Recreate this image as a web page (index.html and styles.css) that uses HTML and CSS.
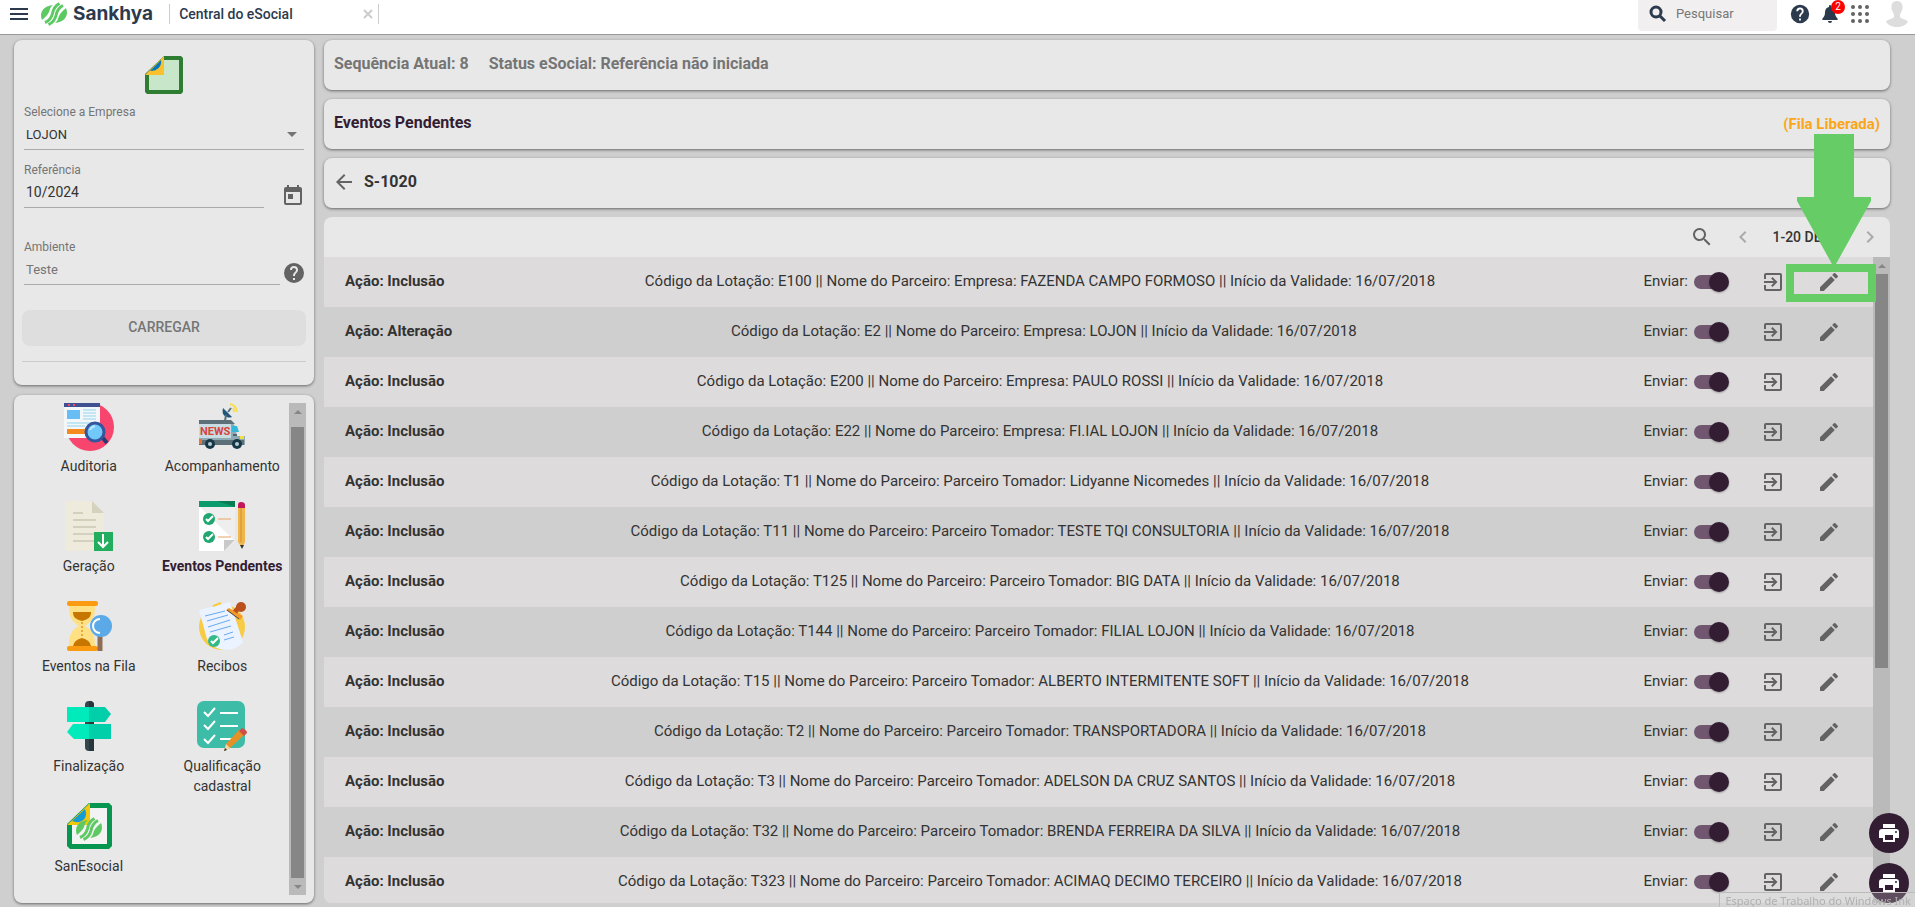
FILE: index.html
```html
<!DOCTYPE html>
<html lang="pt-BR">
<head>
    <meta charset="UTF-8">
    <meta name="viewport" content="width=device-width, initial-scale=1.0">
    <title>Central do eSocial</title>
    <link rel="stylesheet" href="styles.css">
</head>
<body>
    <!-- Ícones reutilizados -->
    <svg class="sprite" aria-hidden="true">
        <symbol id="i-help" viewBox="0 0 24 24"><path d="M12 2a10 10 0 1 0 0 20 10 10 0 0 0 0-20zm1 17h-2v-2h2v2zm2.07-7.75-.9.92C13.45 12.9 13 13.5 13 15h-2v-.5c0-1.1.45-2.1 1.17-2.83l1.24-1.26A2 2 0 1 0 10 9H8a4 4 0 1 1 8 0c0 .88-.36 1.68-.93 2.25z"/></symbol>
        <symbol id="i-search" viewBox="0 0 24 24"><path d="M15.5 14h-.79l-.28-.27a6.5 6.5 0 1 0-.7.7l.27.28v.79l5 4.99L20.49 19l-4.99-5zm-6 0a4.5 4.5 0 1 1 0-9 4.5 4.5 0 0 1 0 9z"/></symbol>
        <symbol id="i-exit" viewBox="0 0 24 24"><path d="M10.09 15.59 11.5 17l5-5-5-5-1.41 1.41L12.67 11H3v2h9.67l-2.58 2.59zM19 3H5a2 2 0 0 0-2 2v4h2V5h14v14H5v-4H3v4a2 2 0 0 0 2 2h14a2 2 0 0 0 2-2V5a2 2 0 0 0-2-2z"/></symbol>
        <symbol id="i-edit" viewBox="0 0 24 24"><path d="M3 17.25V21h3.75L17.81 9.94l-3.75-3.75L3 17.25zM20.71 7.04a1 1 0 0 0 0-1.41l-2.34-2.34a1 1 0 0 0-1.41 0l-1.83 1.83 3.75 3.75 1.83-1.83z"/></symbol>
        <symbol id="i-print" viewBox="0 0 24 24"><path d="M19 8H5a3 3 0 0 0-3 3v6h4v4h12v-4h4v-6a3 3 0 0 0-3-3zm-3 11H8v-5h8v5zm3-7a1 1 0 1 1 0-2 1 1 0 0 1 0 2zM18 3H6v4h12V3z"/></symbol>
        <symbol id="i-leaf" viewBox="0 0 28 24"><path d="M2 18C-1 11 3 4 13 3c-3 2-3 5-4 7-1 3-4 5-7 8z"/><path d="M5 20.500c5-2 6.500-5 7.500-9 1-5 3-8 7-10" fill="none" stroke="#5cc963" stroke-width="3"/><path d="M8.500 22.500c5-2 6.500-5 7.500-9 1-5 3-8 7-10" fill="none" stroke="#5cc963" stroke-width="3"/><path d="M26 6c3 7-1 14-11 15 3-2 3-5 4-7 1-3 4-5 7-8z"/></symbol>
    </svg>

    <header class="topbar">
        <button class="icon-btn menu-btn" type="button" aria-label="Menu">
            <svg width="18" height="12" viewBox="0 0 18 12"><path d="M0 0h18v2H0zM0 5h18v2H0zM0 10h18v2H0z"/></svg>
        </button>
        <a class="brand" href="#">
            <svg width="28" height="24"><use href="#i-leaf"/></svg>
            <span>Sankhya</span>
        </a>
        <div class="tab">
            <span>Central do eSocial</span>
            <button class="icon-btn tab-close" type="button" aria-label="Fechar">
                <svg width="10" height="10" viewBox="0 0 10 10"><path d="M1 1l8 8M9 1L1 9"/></svg>
            </button>
        </div>
        <label class="search">
            <svg width="18" height="18" viewBox="0 0 18 18"><circle cx="7" cy="7" r="5"/><path d="M11 11l5 5"/></svg>
            <input type="text" placeholder="Pesquisar" aria-label="Pesquisar">
        </label>
        <button class="icon-btn top-help" type="button" aria-label="Ajuda">
            <svg width="22" height="22"><use href="#i-help"/></svg>
        </button>
        <button class="icon-btn bell" type="button" aria-label="Notificações">
            <svg width="16" height="18" viewBox="0 0 16 18"><path d="M8 0a1 1 0 0 1 1 1v1c3 .6 4 3 4 5.500 0 3 1 4.500 2.500 6 .5.500.3 1.500-.5 1.500H1c-.8 0-1-1-.5-1.500C2 12 3 10.500 3 7.500 3 5 4 2.600 7 2V1a1 1 0 0 1 1-1zM6 16h4a2 2 0 0 1-4 0z"/></svg>
            <span class="badge">2</span>
        </button>
        <button class="icon-btn apps" type="button" aria-label="Aplicativos">
            <svg width="18" height="18" viewBox="0 0 18 18"><circle cx="2" cy="2" r="2"/><circle cx="9" cy="2" r="2"/><circle cx="16" cy="2" r="2"/><circle cx="2" cy="9" r="2"/><circle cx="9" cy="9" r="2"/><circle cx="16" cy="9" r="2"/><circle cx="2" cy="16" r="2"/><circle cx="9" cy="16" r="2"/><circle cx="16" cy="16" r="2"/></svg>
        </button>
        <button class="icon-btn avatar" type="button" aria-label="Usuário">
            <svg width="22" height="26" viewBox="0 0 22 26"><path d="M11 0c4 0 6 3 5.500 7-.3 3-1.500 5-2.500 6v3c1 2 7 2 8 5-3 4-7 5-11 5s-8-1-11-5c1-3 7-3 8-5v-3c-1-1-2.200-3-2.500-6C5 3 7 0 11 0z"/></svg>
        </button>
    </header>

    <div class="workspace">
        <aside class="sidebar">
            <form class="card filter">
                <svg class="filter-logo" width="38" height="38" viewBox="0 0 38 38">
                    <path d="M19 0h17l2 2v34l-2 2H2l-2-2V18z" fill="#2e7d32"/>
                    <path d="M19 4h15v30H4V18h15z" fill="#c8e6c9"/>
                    <path d="M19 0v19H0z" fill="#fbc02d"/>
                    <path d="M16 4c1 6-3 11-11 11z" fill="#0277bd"/>
                </svg>
                <div class="field">
                    <label for="empresa">Selecione a Empresa</label>
                    <div class="control select-control">
                        <select id="empresa"><option>LOJON</option></select>
                        <svg width="10" height="5" viewBox="0 0 10 5"><path d="M0 0h10L5 5z"/></svg>
                    </div>
                </div>
                <div class="field-row">
                    <div class="field field-ref">
                        <label for="referencia">Referência</label>
                        <input class="control large" type="text" id="referencia" value="10/2024">
                    </div>
                    <button class="icon-btn" type="button" aria-label="Calendário">
                        <svg width="24" height="24" viewBox="0 0 24 24"><path d="M19 3h-1V1h-2v2H8V1H6v2H5a2 2 0 0 0-2 2v14a2 2 0 0 0 2 2h14a2 2 0 0 0 2-2V5a2 2 0 0 0-2-2zm0 16H5V8h14v11zM7 10h5v5H7z"/></svg>
                    </button>
                </div>
                <div class="field-row field-row-env">
                    <div class="field">
                        <label for="ambiente">Ambiente</label>
                        <input class="control muted" type="text" id="ambiente" value="Teste" readonly>
                    </div>
                    <button class="icon-btn" type="button" aria-label="Ajuda do ambiente">
                        <svg width="24" height="24"><use href="#i-help"/></svg>
                    </button>
                </div>
                <button class="load-btn" type="button">CARREGAR</button>
                <hr>
            </form>

            <nav class="card menu">
                <div class="menu-scroll">
                    <div class="menu-grid">
                        <a href="#">
                            <svg width="50" height="50" viewBox="0 0 50 50">
                                <circle cx="26" cy="26" r="24" fill="#f8456d"/>
                                <path d="M0 0h36v37H0z" fill="#f4f7fa"/>
                                <path d="M0 0h36v6H0z" fill="#3f5190"/>
                                <path d="M4 3h2v2H4zM9 3h2v2H9z" fill="#f8456d"/>
                                <path d="M3 9h13v9H3z" fill="#69bdf5"/>
                                <path d="M19 9h13M19 12h13M19 15h13M19 18h13M3 22h30M3 25h18" stroke="#8fd5e9"/>
                                <path d="M3 28h18v5H3z" fill="#f58a1f"/>
                                <path d="M38 36l5 6" stroke="#2b3a75" stroke-width="4"/>
                                <circle cx="31" cy="31" r="9" fill="#70c9f8" stroke="#35569c" stroke-width="3"/>
                                <path d="M26 29q1-3 5-4" stroke="#b9e8ff" stroke-width="2" fill="none"/>
                            </svg>
                            <span>Auditoria</span>
                        </a>
                        <a href="#">
                            <svg width="50" height="50" viewBox="0 0 50 50">
                                <path d="M33 3q6 1 7 8M36 7q1 1 1 4" stroke="#f5df4d" stroke-width="2" fill="none"/>
                                <path d="M26 7c-2 7 3 11 9 9z" fill="#1f5578"/>
                                <path d="M31 11l3-4M29 14l-1 6" stroke="#557280" stroke-width="2"/>
                                <path d="M2 20h32l4 5 2 10h8v9H2z" fill="#90aab4"/>
                                <path d="M2 22h32v15H2z" fill="#c8dce3"/>
                                <path d="M2 19h32l4 4H2zM2 39h45v5H2z" fill="#5c7078"/>
                                <path d="M35 25h5l2 6h-7z" fill="#35b8d8"/>
                                <path d="M36 34h4" stroke="#111d24"/>
                                <path d="M2 38h3v5H2z" fill="#ed7436"/>
                                <path d="M43 35h4v3h-4z" fill="#f1df47"/>
                                <circle cx="13" cy="43" r="5" fill="#173747"/><circle cx="13" cy="43" r="2" fill="#b8cbd2"/>
                                <circle cx="40" cy="43" r="5" fill="#173747"/><circle cx="40" cy="43" r="2" fill="#b8cbd2"/>
                                <text class="news" x="3" y="34">NEWS</text>
                            </svg>
                            <span>Acompanhamento</span>
                        </a>
                        <a href="#">
                            <svg width="50" height="50" viewBox="0 0 50 50">
                                <path d="M1 0h27l12 12v38H1z" fill="#eeebdd"/>
                                <path d="M28 0v12h12z" fill="#d6d2c0"/>
                                <path d="M9 12h10M9 19h23M9 26h23M9 33h23M9 40h23" stroke="#d4d0be" stroke-width="2"/>
                                <path d="M30 31h19v19H30z" fill="#22ae5e"/>
                                <path d="M39 33v13M34 41l5 5 5-5" stroke="#fff" stroke-width="2" fill="none"/>
                            </svg>
                            <span>Geração</span>
                        </a>
                        <a class="active" href="#">
                            <svg width="50" height="50" viewBox="0 0 50 50">
                                <path d="M2 0h36v39L27 50H2z" fill="#eee"/>
                                <path d="M2 5l36 35-11 10H2z" fill="#fff"/>
                                <path d="M27 50V39h11z" fill="#c9c9c9"/>
                                <path d="M2 0h36v6H2z" fill="#0b9b6c"/>
                                <path d="M20 0h18v6z" fill="#087d53"/>
                                <circle cx="12" cy="18" r="6" fill="#20a670"/><circle cx="12" cy="36" r="6" fill="#20a670"/>
                                <path d="M9 18l2 2 5-5M9 36l2 2 5-5" stroke="#fff" stroke-width="2" fill="none"/>
                                <path d="M21 18h13M21 36h13" stroke="#e6a565"/>
                                <path d="M41 5h7v36l-3 6-4-6z" fill="#f1b64a"/>
                                <path d="M44 7v34" stroke="#d28e31"/>
                                <path d="M41 7V4q0-3 3-3 4 0 4 3v3z" fill="#c2185b"/>
                                <path d="M43 44h4l-2 4z" fill="#333"/>
                            </svg>
                            <span>Eventos Pendentes</span>
                        </a>
                        <a href="#">
                            <svg width="50" height="50" viewBox="0 0 50 50">
                                <path d="M5 5h26c0 10-2 15-10 20 8 4 10 10 10 20H5c0-10 2-16 10-20C7 20 5 15 5 5z" fill="#ffe082"/>
                                <path d="M9 11h18c0 5-2 7-9 9-7-2-9-4-9-9zM9 45q1-6 9-8 8 2 9 8z" fill="#c77700"/>
                                <path d="M18 21v15" stroke="#c77700" stroke-dasharray="2 2"/>
                                <rect x="3" y="0" width="31" height="5" rx="2" fill="#fb9b12"/>
                                <rect x="3" y="45" width="31" height="5" rx="2" fill="#fb9b12"/>
                                <path d="M36 35v15" stroke="#8d6e55" stroke-width="5"/>
                                <circle cx="37" cy="25" r="11" fill="#5ca9e8"/>
                                <path d="M36 18a7 7 0 0 0 0 14" stroke="#fff" fill="none" stroke-width="2"/>
                            </svg>
                            <span>Eventos na Fila</span>
                        </a>
                        <a href="#">
                            <svg width="50" height="50" viewBox="0 0 50 50">
                                <circle cx="25" cy="26" r="23" fill="#f8cb45"/>
                                <path d="M2 9l31-8 13 40c-6 8-18 10-26 6-5-2-7-6-10-9z" fill="#eaf3ff"/>
                                <path d="M16 5l8-3" stroke="#f8cb45" stroke-width="2"/>
                                <path d="M8 15l20-5M10 20l21-6M11 26l22-7M13 31l21-6M27 34l9-3M27 39l10-3" stroke="#68aaf0"/>
                                <path d="M32 7l14 8-3 4-14-10z" fill="#f49a28"/>
                                <path d="M30 9l12 9" stroke="#454b55"/>
                                <path d="M38 11l4-5" stroke="#b9501e" stroke-width="5"/>
                                <circle cx="44" cy="6" r="5" fill="#b9501e"/>
                                <circle cx="17" cy="40" r="6" fill="#35b987"/>
                                <path d="M14 40l2 2 5-5" stroke="#fff" stroke-width="2" fill="none"/>
                            </svg>
                            <span>Recibos</span>
                        </a>
                        <a href="#">
                            <svg width="50" height="50" viewBox="0 0 50 50">
                                <rect x="21" y="0" width="9" height="50" rx="4" fill="#35474d"/>
                                <path d="M25 0q5 0 5 4v46h-5z" fill="#27373c"/>
                                <path d="M3 6h22v15H3zM25 23v15H10l-7-7 6-8z" fill="#00ebbb"/>
                                <path d="M25 6h16l6 7-6 8H25zM25 23h22v15H25z" fill="#00cfaa"/>
                            </svg>
                            <span>Finalização</span>
                        </a>
                        <a href="#">
                            <svg width="50" height="50" viewBox="0 0 50 50">
                                <rect width="48" height="47" rx="7" fill="#3dbca7"/>
                                <path d="M7 11l4 4 7-8M7 24l4 4 7-8M7 38l4 4 7-8M23 12h18M23 25h18M23 38h15" stroke="#fff" stroke-width="2" fill="none"/>
                                <path d="M29 43l13-14 5 5-14 13-6 3z" fill="#e69128"/>
                                <path d="M42 30l3-3q5 2 5 5l-3 3z" fill="#cf4e45"/>
                                <path d="M29 43l4 4-6 3z" fill="#f2d7aa"/>
                                <path d="M27 50l1-3 2 2z" fill="#333"/>
                            </svg>
                            <span>Qualificação cadastral</span>
                        </a>
                        <a href="#">
                            <svg width="50" height="50" viewBox="0 0 50 50">
                                <path d="M25 2h20l3 3v40l-3 3H6l-3-3V23z" fill="#079650"/>
                                <path d="M25 7h18v36H8V23h17z" fill="#f2f3f2"/>
                                <path d="M26 2v22H3z" fill="#f3c80b"/>
                                <path d="M21 8c4 9-4 16-13 12z" fill="#179bd3"/>
                                <svg x="11" y="16" width="28" height="24" fill="#5cc963"><use href="#i-leaf"/></svg>
                            </svg>
                            <span>SanEsocial</span>
                        </a>
                    </div>
                </div>
                <div class="scrollbar menu-bar" aria-hidden="true">
                    <i class="arrow up"></i>
                    <i class="thumb"></i>
                    <i class="arrow down"></i>
                </div>
            </nav>
        </aside>

        <main class="content">
            <section class="card bar status">
                <span>Sequência Atual: 8</span>
                <span>Status eSocial: Referência não iniciada</span>
            </section>
            <section class="card bar">
                <h1>Eventos Pendentes</h1>
                <span class="queue">(Fila Liberada)</span>
            </section>
            <section class="card bar event">
                <button class="icon-btn" type="button" aria-label="Voltar">
                    <svg width="24" height="24" viewBox="0 0 24 24"><path d="M20 11H7.830l5.590-5.590L12 4l-8 8 8 8 1.410-1.410L7.830 13H20z"/></svg>
                </button>
                <h2>S-1020</h2>
            </section>

            <section class="list">
                <div class="list-tools">
                    <button class="icon-btn" type="button" aria-label="Buscar"><svg width="24" height="24"><use href="#i-search"/></svg></button>
                    <button class="icon-btn page-btn" type="button" aria-label="Anterior"><svg width="24" height="24" viewBox="0 0 24 24"><path d="M15.410 7.410L14 6l-6 6 6 6 1.410-1.410L10.830 12z"/></svg></button>
                    <span class="pages">1-20 DE 24</span>
                    <button class="icon-btn page-btn" type="button" aria-label="Próxima"><svg width="24" height="24" viewBox="0 0 24 24"><path d="M8.590 16.590L13.170 12 8.590 7.410 10 6l6 6-6 6z"/></svg></button>
                </div>
                <div class="list-body">
                    <ul class="rows" id="rows"></ul>
                    <div class="scrollbar list-bar" aria-hidden="true">
                        <i class="arrow up"></i>
                        <i class="thumb"></i>
                    </div>
                </div>
            </section>
        </main>
    </div>

    <!-- Destaque do botão de edição -->
    <svg class="pointer" width="90" height="168" viewBox="0 0 90 168" aria-hidden="true">
        <path d="M28 0h40v63h17v4L50 130h-4L11 67v-4h17z"/>
        <path fill-rule="evenodd" d="M0 130h90v38H0zM8 138v22h74v-22z"/>
    </svg>

    <div class="fabs">
        <button type="button" aria-label="Imprimir"><svg width="24" height="24"><use href="#i-print"/></svg></button>
        <button type="button" aria-label="Imprimir todos"><svg width="24" height="24"><use href="#i-print"/></svg></button>
    </div>
    <div class="tooltip">Espaço de Trabalho do Windows Ink</div>

    <script src="script.js"></script>
</body>
</html>
```

FILE: styles.css
```css
* {
    box-sizing: border-box;
}

body {
    margin: 0;
    height: 100vh;
    display: flex;
    flex-direction: column;
    overflow: hidden;
    background-color: #cfcfcf;
    color: #333;
    font-family: Roboto, "Liberation Sans", sans-serif;
    font-size: 15px;
}

button, input, select {
    font-family: inherit;
    color: inherit;
}

a {
    color: inherit;
    text-decoration: none;
}

svg {
    display: block;
    flex-shrink: 0;
}

.sprite {
    position: absolute;
    width: 0;
    height: 0;
}

.icon-btn {
    display: flex;
    padding: 0;
    border: none;
    background: none;
    fill: #636363;
    cursor: pointer;
}

/* Barra superior */
.topbar {
    display: flex;
    align-items: center;
    height: 35px;
    padding: 0 7px 7px 10px;
    background-color: #fff;
    border-bottom: 1px solid #999;
    flex-shrink: 0;
}

.menu-btn,
.top-help,
.bell {
    fill: #2c3a4d;
}

.brand {
    display: flex;
    align-items: center;
    gap: 5px;
    margin-left: 12px;
    fill: #5cc963;
    color: #2c3a4d;
    font-family: Inter, sans-serif;
    font-size: 19px;
    font-weight: 700;
    line-height: 24px;
}

.tab {
    display: flex;
    align-items: center;
    justify-content: space-between;
    width: 210px;
    height: 20px;
    margin-left: 16px;
    padding: 0 5px 0 9px;
    border-left: 1px solid #ccc;
    border-right: 1px solid #ccc;
    color: #2c3a4d;
    font-size: 14px;
    font-weight: 500;
}

.tab-close {
    stroke: #ccc;
    stroke-width: 2;
}

.search {
    display: flex;
    align-items: center;
    gap: 9px;
    width: 139px;
    height: 31px;
    margin: 0 12px 0 auto;
    padding: 0 11px 4px;
    border-radius: 0 0 4px 4px;
    background-color: #f1efef;
    align-self: flex-start;
}

.search svg {
    fill: none;
    stroke: #2c3a4d;
    stroke-width: 3;
}

.search input {
    width: 100%;
    min-width: 0;
    padding: 0;
    border: none;
    background: none;
    font-size: 13px;
}

.search input::placeholder {
    color: #777;
}

.bell {
    position: relative;
    margin-left: 11px;
}

.badge {
    position: absolute;
    top: -5px;
    right: -7px;
    width: 14px;
    height: 14px;
    border-radius: 50%;
    background-color: #f00;
    color: #fff;
    font-size: 10px;
    line-height: 14px;
    text-align: center;
}

.apps {
    margin-left: 13px;
}

.avatar {
    margin-left: 17px;
    fill: #ddd;
}

/* Área de trabalho */
.workspace {
    display: flex;
    flex: 1;
    gap: 10px;
    min-height: 0;
    padding: 5px 25px 4px 14px;
}

.card {
    background-color: #e8e8e8;
    border-radius: 8px;
    box-shadow: 0 1px 3px rgba(0, 0, 0, 0.5);
}

.sidebar {
    display: flex;
    flex-direction: column;
    gap: 10px;
    width: 300px;
    flex-shrink: 0;
}

.filter {
    padding: 16px 8px 23px;
    flex-shrink: 0;
}

.filter-logo {
    margin: 0 auto 10px;
}

.field {
    flex: 1;
    padding-left: 2px;
}

.filter > .field {
    padding-right: 2px;
}

.field label {
    display: block;
    color: #757575;
    font-size: 12px;
    line-height: 16px;
}

.control {
    display: block;
    width: 100%;
    height: 30px;
    padding: 0 2px;
    border: none;
    border-bottom: 1px solid #aaa;
    border-radius: 0;
    background: none;
    font-size: 13px;
}

.control.large {
    padding-bottom: 2px;
    font-size: 14px;
}

.muted {
    color: #757575;
}

.select-control {
    display: flex;
    align-items: center;
    padding-right: 7px;
}

.select-control select {
    flex: 1;
    padding: 0;
    border: none;
    background: none;
    appearance: none;
    font-size: 13px;
}

.select-control svg {
    fill: #757575;
}

.field-row {
    display: flex;
    align-items: flex-end;
    gap: 17px;
    margin-top: 12px;
    padding-right: 1px;
}

.field-row-env {
    gap: 2px;
    margin-top: 31px;
    padding-right: 0;
}

.load-btn {
    width: 100%;
    height: 36px;
    margin-top: 25px;
    padding: 0 0 2px;
    border: none;
    border-radius: 8px;
    background-color: #dedede;
    color: #757575;
    font-size: 14px;
    font-weight: 500;
}

.filter hr {
    margin: 15px 0 0;
    border: none;
    border-top: 1px solid #ccc;
}

.menu {
    display: flex;
    flex: 1;
    min-height: 0;
    padding: 8px;
}

.menu-scroll {
    flex: 1;
    overflow: hidden;
}

.menu-grid {
    display: grid;
    grid-template-columns: 1fr 1fr;
    grid-auto-rows: 100px;
    margin-top: -2px;
}

.menu-grid a {
    display: flex;
    flex-direction: column;
    align-items: center;
    gap: 5px;
    font-size: 14px;
    line-height: 20px;
    text-align: center;
}

.menu-grid span {
    max-width: 124px;
}

.menu-grid a:nth-child(8) span {
    max-width: 100px;
}

.menu-grid .active {
    color: #331d33;
    font-weight: 700;
}

.news {
    fill: #d9433a;
    font-size: 11px;
    font-weight: 700;
}

/* Barras de rolagem */
.scrollbar {
    display: flex;
    flex-direction: column;
    align-items: center;
    width: 17px;
    background-color: #bababa;
}

.scrollbar .thumb {
    width: 13px;
    background-color: #868686;
}

.arrow {
    height: 17px;
    flex-shrink: 0;
}

.arrow::before {
    content: "";
    display: block;
    margin-top: 7px;
    border: 4px solid transparent;
}

.arrow.up::before {
    margin-top: 3px;
    border-bottom-color: #868686;
}

.arrow.down::before {
    border-top-color: #868686;
}

.menu-bar .thumb {
    flex: 1;
    margin-top: 7px;
}

.list-bar .thumb {
    height: 61%;
}

/* Conteúdo */
.content {
    display: flex;
    flex: 1;
    flex-direction: column;
    gap: 9px;
    min-width: 0;
}

.bar {
    display: flex;
    height: 50px;
    padding: 12px 10px;
    font-size: 16px;
    font-weight: 700;
    line-height: 24px;
    flex-shrink: 0;
}

.bar h1,
.bar h2 {
    margin: 0;
    font-size: 16px;
    font-weight: 700;
}

.bar h1 {
    color: #331d33;
}

.status {
    gap: 20px;
    color: #757575;
}

.queue {
    margin-left: auto;
    color: #faa61a;
    font-size: 15px;
    line-height: 26px;
}

.event {
    gap: 8px;
    padding-left: 8px;
}

.list {
    display: flex;
    flex: 1;
    flex-direction: column;
    min-height: 0;
    border-radius: 8px;
    overflow: hidden;
    background-color: #e8e8e8;
}

.list-tools {
    display: flex;
    align-items: center;
    justify-content: flex-end;
    gap: 17px;
    height: 40px;
    padding-right: 8px;
    flex-shrink: 0;
}

.page-btn {
    fill: #aaa;
}

.pages {
    font-size: 14px;
    font-weight: 500;
}

.list-body {
    display: flex;
    flex: 1;
    min-height: 0;
}

.rows {
    flex: 1;
    margin: 0;
    padding: 0;
    list-style: none;
    overflow: hidden;
}

.rows li {
    display: flex;
    align-items: center;
    height: 50px;
    padding: 0 32px 0 21px;
    background-color: #cfcfcf;
}

.rows li:nth-child(odd) {
    background-color: #dddbdc;
}

.rows strong,
.rows p,
.rows label span {
    padding-bottom: 2px;
}

.rows strong {
    font-weight: 700;
}

.rows p {
    flex: 1;
    margin: 0;
    text-align: center;
}

.rows label {
    display: flex;
    align-items: center;
    gap: 5px;
    padding-left: 8px;
}

.rows .icon-btn {
    margin-left: 32px;
}

.switch {
    position: relative;
    width: 36px;
    height: 20px;
    margin: 0;
    appearance: none;
}

.switch::before {
    content: "";
    position: absolute;
    top: 3px;
    left: 1px;
    width: 34px;
    height: 14px;
    border-radius: 7px;
    background-color: #70566f;
}

.switch::after {
    content: "";
    position: absolute;
    top: 0;
    right: 0;
    width: 20px;
    height: 20px;
    border-radius: 50%;
    background-color: #331d33;
    box-shadow: 0 1px 2px rgba(0, 0, 0, 0.3);
}

/* Elementos flutuantes */
.pointer {
    position: absolute;
    top: 134px;
    right: 39px;
    fill: #66cc66;
}

.fabs {
    position: fixed;
    right: 6px;
    bottom: 4px;
    display: flex;
    flex-direction: column;
    gap: 10px;
}

.fabs button {
    display: flex;
    align-items: center;
    justify-content: center;
    width: 40px;
    height: 40px;
    padding: 0;
    border: none;
    border-radius: 50%;
    background-color: #331d33;
    fill: #fff;
}

.tooltip {
    position: fixed;
    right: 0;
    bottom: 0;
    padding: 1px 4px 0 5px;
    border: 1px solid #bbb;
    border-width: 1px 0 0 1px;
    background-color: rgba(225, 225, 225, 0.25);
    color: #b0b0b0;
    font-family: "Noto Sans", sans-serif;
    font-size: 11px;
    line-height: 13px;
    white-space: nowrap;
}
```

FILE: script.js
```js
const eventos = [
    ['Inclusão', 'E100', 'Empresa: FAZENDA CAMPO FORMOSO'],
    ['Alteração', 'E2', 'Empresa: LOJON'],
    ['Inclusão', 'E200', 'Empresa: PAULO ROSSI'],
    ['Inclusão', 'E22', 'Empresa: FI.IAL LOJON'],
    ['Inclusão', 'T1', 'Parceiro Tomador: Lidyanne Nicomedes'],
    ['Inclusão', 'T11', 'Parceiro Tomador: TESTE TQI CONSULTORIA'],
    ['Inclusão', 'T125', 'Parceiro Tomador: BIG DATA'],
    ['Inclusão', 'T144', 'Parceiro Tomador: FILIAL LOJON'],
    ['Inclusão', 'T15', 'Parceiro Tomador: ALBERTO INTERMITENTE SOFT'],
    ['Inclusão', 'T2', 'Parceiro Tomador: TRANSPORTADORA'],
    ['Inclusão', 'T3', 'Parceiro Tomador: ADELSON DA CRUZ SANTOS'],
    ['Inclusão', 'T32', 'Parceiro Tomador: BRENDA FERREIRA DA SILVA'],
    ['Inclusão', 'T323', 'Parceiro Tomador: ACIMAQ DECIMO TERCEIRO']
];

// Monta as linhas da lista
document.getElementById('rows').innerHTML = eventos.map(([acao, codigo, parceiro]) => `
    <li>
        <strong>Ação: ${acao}</strong>
        <p>Código da Lotação: ${codigo} || Nome do Parceiro: ${parceiro} || Início da Validade: 16/07/2018</p>
        <label><span>Enviar:</span><input class="switch" type="checkbox" checked></label>
        <button class="icon-btn" type="button" aria-label="Abrir"><svg width="24" height="24"><use href="#i-exit"/></svg></button>
        <button class="icon-btn" type="button" aria-label="Editar"><svg width="24" height="24"><use href="#i-edit"/></svg></button>
    </li>`).join('');
```
